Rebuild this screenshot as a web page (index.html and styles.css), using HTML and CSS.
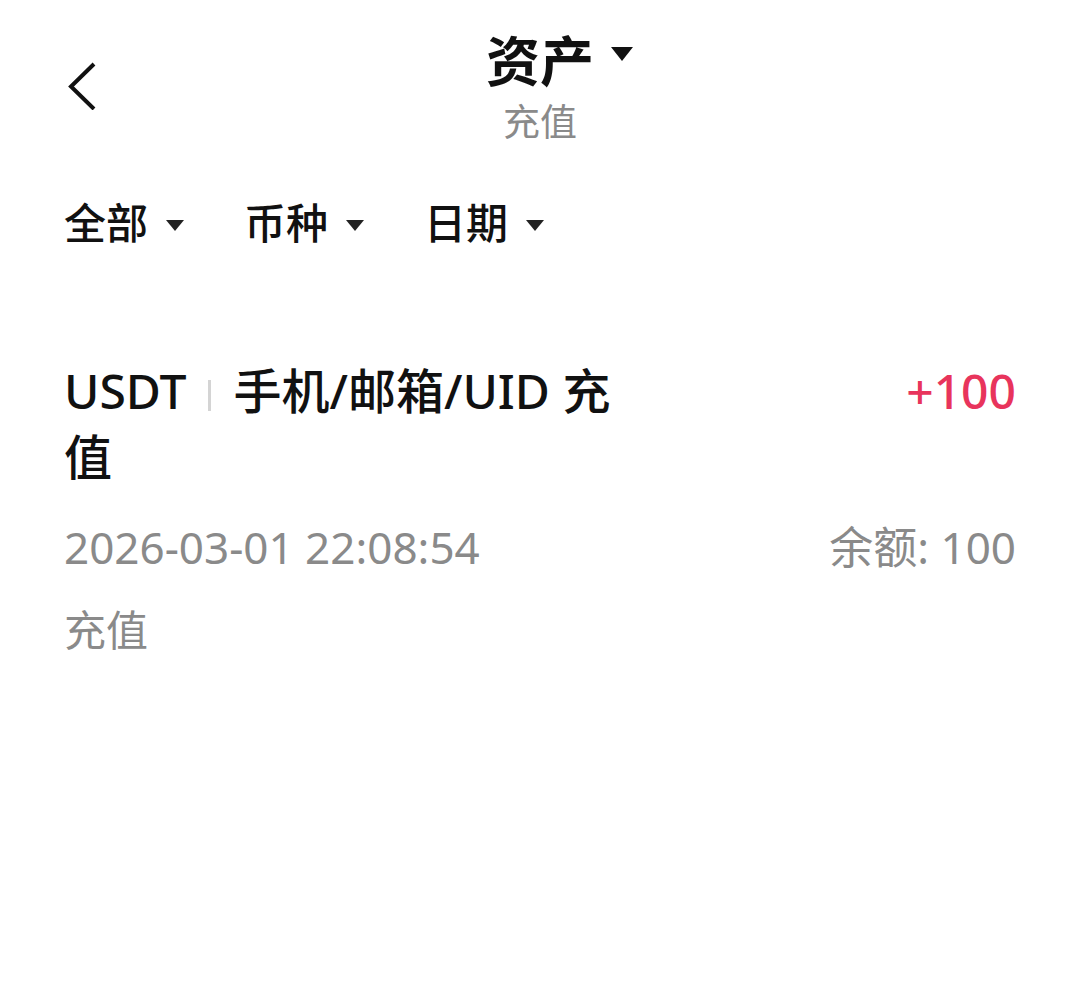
FILE: index.html
```html
<!DOCTYPE html>
<html lang="zh-CN">
<head>
    <meta charset="UTF-8">
    <meta name="viewport" content="width=device-width, initial-scale=1.0">
    <title>资产 - 充值</title>
    <link rel="stylesheet" href="styles.css">
</head>
<body>
    <div class="header">
        <div class="back">
            <svg width="30" height="48" viewBox="0 0 30 48">
                <path d="M27 2 L4 24.5 L27 47" fill="none" stroke="#111" stroke-width="4"/>
            </svg>
        </div>
        <div class="title"><span class="title-text">资产</span></div>
        <div class="subtitle">充值</div>
    </div>

    <div class="filters">
        <div class="filter">全部<span class="caret"></span></div>
        <div class="filter">币种<span class="caret"></span></div>
        <div class="filter">日期<span class="caret"></span></div>
    </div>

    <div class="record">
        <div class="record-top">
            <div class="record-name">USDT<span class="sep"></span>手机/邮箱/UID 充值</div>
            <div class="record-amount">+100</div>
        </div>
        <div class="record-meta">
            <span>2026-03-01 22:08:54</span>
            <span>余额: 100</span>
        </div>
        <div class="record-type">充值</div>
    </div>
</body>
</html>
```

FILE: styles.css
```css
body {
    margin: 0;
    padding: 0;
    background-color: #fff;
    color: #111;
    font-family: "Noto Sans", "Noto Sans CJK SC", sans-serif;
}
.header {
    position: relative;
    padding-top: 29px;
    text-align: center;
}
.back {
    position: absolute;
    left: 67px;
    top: 62px;
    line-height: 0;
}
.title {
    font-size: 54px;
    line-height: 64px;
    font-weight: 700;
}
.title-text {
    position: relative;
}
.title-text::after {
    content: "";
    position: absolute;
    left: calc(100% + 17px);
    top: 23px;
    border-left: 11px solid transparent;
    border-right: 11px solid transparent;
    border-top: 14px solid #111;
}
.subtitle {
    margin-top: 7px;
    font-size: 37px;
    line-height: 44px;
    color: #8a8a8a;
}
.filters {
    display: flex;
    gap: 60px;
    margin-top: 54px;
    padding: 0 64px;
}
.filter {
    display: flex;
    align-items: center;
    font-size: 42px;
    line-height: 50px;
    font-weight: 500;
}
.caret {
    margin-left: 18px;
    margin-top: 4px;
    border-left: 9px solid transparent;
    border-right: 9px solid transparent;
    border-top: 11px solid #222;
}
.record {
    margin-top: 110px;
    padding: 0 64px;
}
.record-top {
    display: flex;
    justify-content: space-between;
    align-items: flex-start;
}
.record-name {
    max-width: 570px;
    font-size: 48px;
    line-height: 66px;
    font-weight: 500;
}
.sep {
    display: inline-block;
    width: 3px;
    height: 31px;
    margin: 0 22px;
    background-color: #d4d4d4;
    vertical-align: -2px;
}
.record-amount {
    font-size: 48px;
    line-height: 66px;
    font-weight: 500;
    color: #e8345c;
}
.record-meta {
    display: flex;
    justify-content: space-between;
    margin-top: 32px;
    font-size: 44px;
    line-height: 50px;
    color: #8a8a8a;
}
.record-type {
    margin-top: 33px;
    font-size: 42px;
    line-height: 50px;
    color: #8a8a8a;
}
```
